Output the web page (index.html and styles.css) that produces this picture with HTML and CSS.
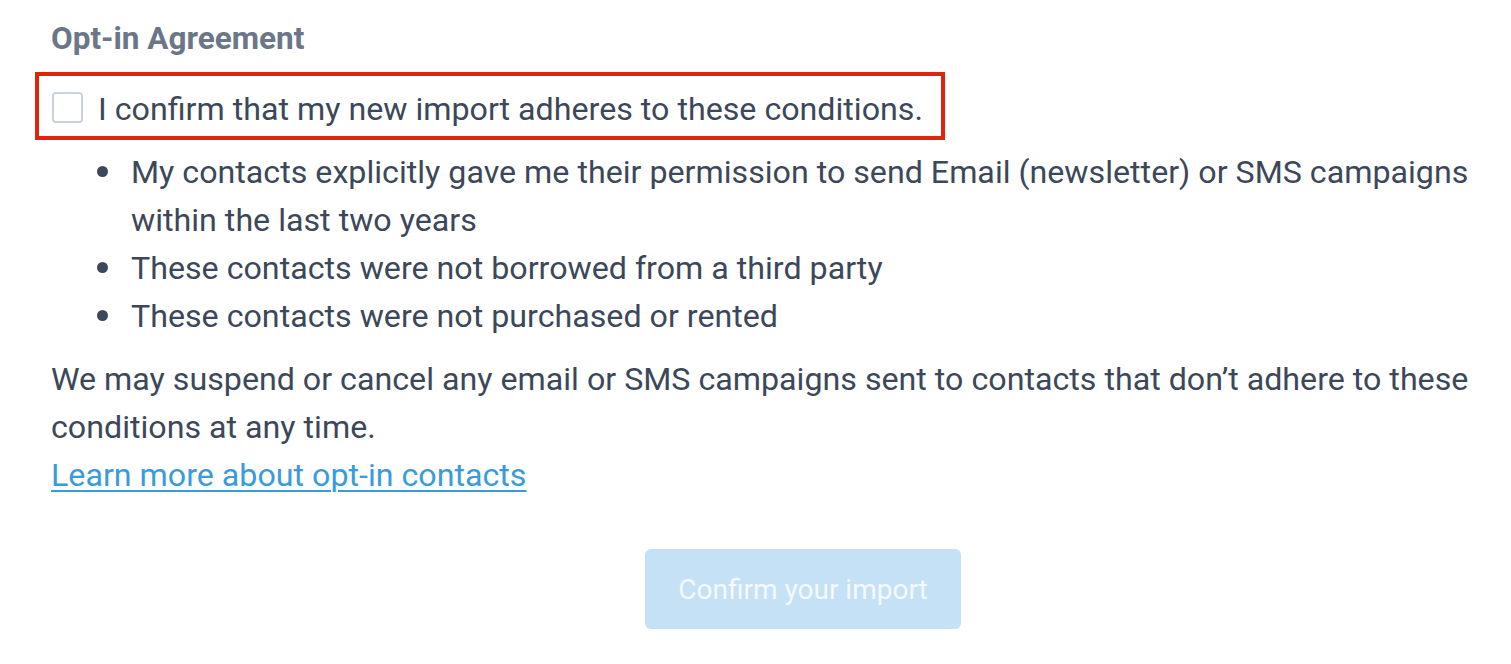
FILE: index.html
```html
<!DOCTYPE html>
<html>
<head>
<meta charset="utf-8">
<link rel="stylesheet" href="styles.css">
</head>
<body>
<div class="page">
  <h2 class="title">Opt-in Agreement</h2>
  <label class="confirm">
    <span class="box"></span>
    <span class="confirm-text">I confirm that my new import adheres to these conditions.</span>
  </label>
  <ul class="conditions">
    <li>My contacts explicitly gave me their permission to send Email (newsletter) or SMS campaigns within the last two years</li>
    <li>These contacts were not borrowed from a third party</li>
    <li>These contacts were not purchased or rented</li>
  </ul>
  <p class="notice">We may suspend or cancel any email or SMS campaigns sent to contacts that don’t adhere to these conditions at any time.<br><a class="learn" href="#">Learn more about opt-in contacts</a></p>
  <div class="actions">
    <button class="btn" disabled>Confirm your import</button>
  </div>
</div>
</body>
</html>
```
FILE: styles.css
```css
html, body {
  margin: 0;
  padding: 0;
  background: #ffffff;
}
.page {
  font-family: Roboto, "Noto Sans", sans-serif;
  color: #3c4859;
  font-size: 32.2px;
  line-height: 48px;
  padding: 15px 20px 0 51px;
}
.title {
  margin: 0;
  font-size: 31.5px;
  font-weight: 700;
  line-height: 48px;
  color: #6b7689;
}
.confirm {
  margin: 9px 0 0 -16px;
  display: inline-flex;
  align-items: center;
  gap: 15px;
  border: 4px solid #e0240c;
  padding: 9px 18px 3px 13px;
}
.box {
  width: 27px;
  height: 27px;
  border: 2px solid #c8d2df;
  border-radius: 4px;
  flex: none;
  margin-top: -4px;
}
.confirm-text {
  white-space: nowrap;
}
.conditions {
  margin: 8px 0 0 0;
  padding-left: 80px;
  list-style: none;
}
.conditions li::before {
  content: "";
  display: inline-block;
  width: 11px;
  height: 11px;
  border-radius: 50%;
  background: #3c4859;
  margin-left: -34px;
  margin-right: 23px;
  vertical-align: middle;
  position: relative;
  top: -3px;
}
.notice {
  margin: 15px 0 0 0;
}
.learn {
  color: #3a9bdc;
  text-decoration: underline;
  text-underline-offset: 4px;
  text-decoration-thickness: 2px;
}
.actions {
  margin-top: 50px;
  padding-left: 594px;
}
.btn {
  width: 316px;
  height: 80px;
  border: none;
  border-radius: 6px;
  background: #c4e1f5;
  color: #f3f9fd;
  font-family: Roboto, "Noto Sans", sans-serif;
  font-size: 28px;
  padding: 0;
}
```
